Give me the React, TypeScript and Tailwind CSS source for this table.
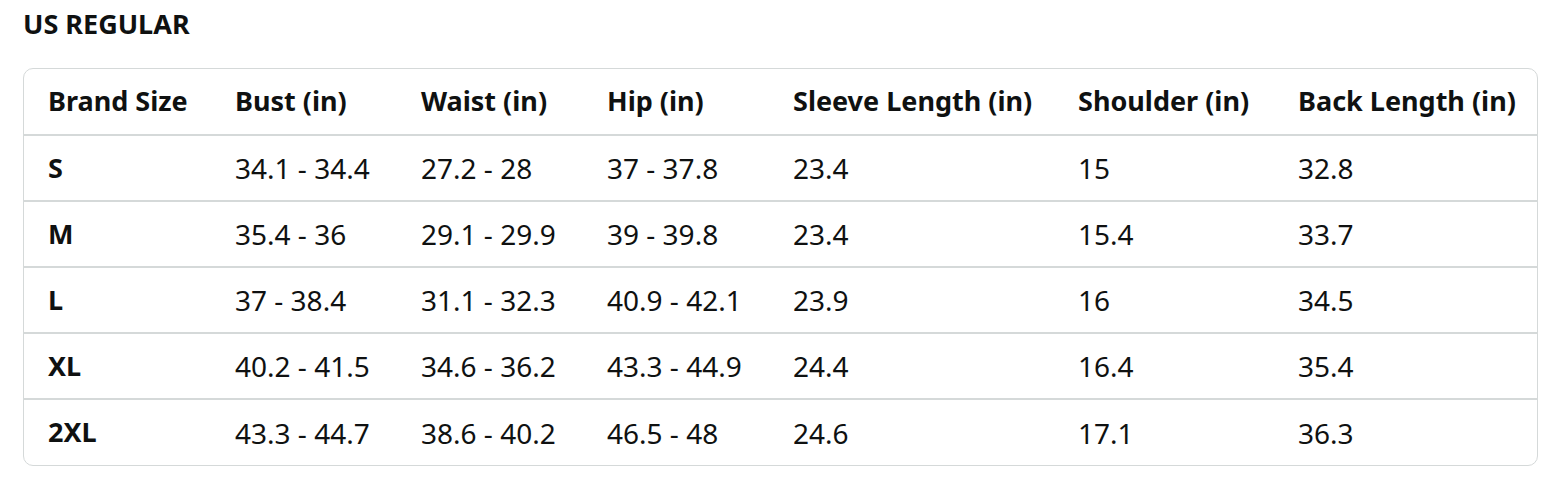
const headers = [
  "Brand Size",
  "Bust (in)",
  "Waist (in)",
  "Hip (in)",
  "Sleeve Length (in)",
  "Shoulder (in)",
  "Back Length (in)",
];

const rows = [
  ["S", "34.1 - 34.4", "27.2 - 28", "37 - 37.8", "23.4", "15", "32.8"],
  ["M", "35.4 - 36", "29.1 - 29.9", "39 - 39.8", "23.4", "15.4", "33.7"],
  ["L", "37 - 38.4", "31.1 - 32.3", "40.9 - 42.1", "23.9", "16", "34.5"],
  ["XL", "40.2 - 41.5", "34.6 - 36.2", "43.3 - 44.9", "24.4", "16.4", "35.4"],
  ["2XL", "43.3 - 44.7", "38.6 - 40.2", "46.5 - 48", "24.6", "17.1", "36.3"],
];

const colWidths = [187, 186, 186, 186, 285, 220, 263];

export default function App() {
  return (
    <div className="w-[1564px] h-[488px] bg-white px-[23px] text-[#0f1111] font-['Noto_Sans',sans-serif]">
      <h2 className="h-[48px] leading-[48px] text-[27px] font-bold">US REGULAR</h2>
      <div className="mt-[20px] w-[1515px] rounded-[10px] border border-[#d5d9d9] overflow-hidden">
        <table className="w-full table-fixed border-collapse">
          <colgroup>
            {colWidths.map((w, i) => (
              <col key={i} style={{ width: w }} />
            ))}
          </colgroup>
          <thead>
            <tr className="h-[66px]">
              {headers.map((h) => (
                <th key={h} className="pl-[24px] text-left text-[27px] font-bold whitespace-nowrap">
                  {h}
                </th>
              ))}
            </tr>
          </thead>
          <tbody>
            {rows.map((r) => (
              <tr key={r[0]} className="h-[66px] border-t-2 border-[#d5d9d9]">
                {r.map((c, i) => (
                  <td
                    key={i}
                    className={`pl-[24px] whitespace-nowrap ${i === 0 ? "text-[27px] font-bold" : "text-[28px] font-normal"}`}
                  >
                    {c}
                  </td>
                ))}
              </tr>
            ))}
          </tbody>
        </table>
      </div>
    </div>
  );
}
